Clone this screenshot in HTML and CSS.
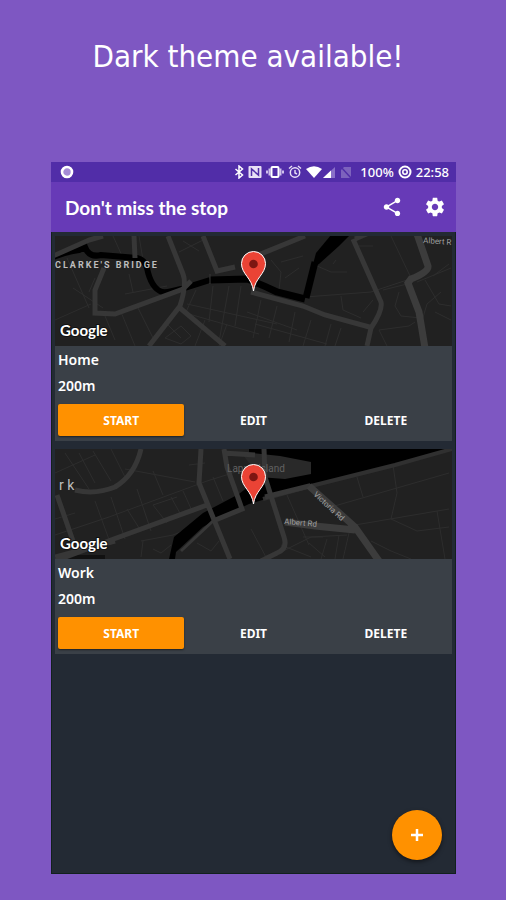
FILE: index.html
```
<!DOCTYPE html>
<html lang="en">
<head>
  <meta charset="UTF-8" />
  <meta name="viewport" content="width=device-width, initial-scale=1" />
  <title>Don't miss the stop</title>
  <link rel="stylesheet" href="styles.css">
</head>

<body>
  <h1 class="headline">Dark theme available!</h1>

  <div class="phone">
    <div class="status-bar">
      <svg class="status-dot" viewBox="0 0 14 14">
        <circle cx="7" cy="7" r="5" fill="#a58bd6" stroke="#fff" stroke-width="2.6"/>
      </svg>
      <div class="status-icons">
        <!-- bluetooth -->
        <svg width="10" height="14" viewBox="0 0 10 14">
          <path d="M1.500 4l7 6L5 13V1l3.500 3-7 6" fill="none" stroke="#fff" stroke-width="1.500"/>
        </svg>
        <!-- nfc -->
        <svg width="14" height="14" viewBox="0 0 14 14">
          <rect x="0.500" y="1" width="13" height="12" rx="1" fill="#e8e0f6"/>
          <path d="M3.500 11V4l7 6V3" fill="none" stroke="#512da8" stroke-width="1.500"/>
        </svg>
        <!-- vibrate -->
        <svg width="18" height="14" viewBox="0 0 18 14">
          <path d="M3.500 3.500v7M14.500 3.500v7M1 5.500v3M17 5.500v3" stroke="#cfc0ec" stroke-width="2"/>
          <rect x="5.500" y="2" width="7" height="10" rx="1" fill="none" stroke="#fff" stroke-width="2"/>
        </svg>
        <!-- alarm -->
        <svg width="14" height="14" viewBox="0 0 14 14">
          <circle cx="7" cy="7.500" r="4.700" fill="none" stroke="#e8e0f6" stroke-width="1.500"/>
          <path d="M1 3.500L4 1M13 3.500L10 1M7 5v3l2 1" fill="none" stroke="#e8e0f6" stroke-width="1.400"/>
        </svg>
        <!-- wifi and signal -->
        <svg width="30" height="14" viewBox="0 0 30 14">
          <path d="M0 4Q8 -1.500 16 4L8 13z" fill="#fff"/>
          <path d="M17 13L29 2v11z" fill="#8a6fc8"/>
          <path d="M17 13L25 5.500V13z" fill="#fff"/>
        </svg>
        <!-- no sim -->
        <svg class="no-sim" width="12" height="14" viewBox="0 0 12 14">
          <path d="M4 2h7v11H1V5z" fill="#7d62bd"/>
          <path d="M0 1l11 12" stroke="#512da8" stroke-width="1.500"/>
        </svg>
        <span>100%</span>
        <!-- battery -->
        <svg width="14" height="14" viewBox="0 0 14 14">
          <circle cx="7" cy="7" r="5.500" fill="none" stroke="#fff" stroke-width="2"/>
          <circle cx="7" cy="7" r="2.200" fill="none" stroke="#fff" stroke-width="1.600"/>
        </svg>
        <span>22:58</span>
      </div>
    </div>

    <header class="app-bar">
      <h2>Don't miss the stop</h2>
      <button type="button" class="icon-button" aria-label="Share">
        <svg width="22" height="22" viewBox="0 0 24 24">
          <path d="M18 16.080c-.76 0-1.440.3-1.960.77L8.910 12.700c.05-.23.09-.46.09-.7s-.04-.47-.09-.7l7.050-4.110c.54.5 1.250.81 2.040.81 1.660 0 3-1.340 3-3s-1.340-3-3-3-3 1.340-3 3c0 .24.04.47.09.7L8.040 9.810C7.500 9.310 6.790 9 6 9c-1.660 0-3 1.340-3 3s1.340 3 3 3c.79 0 1.500-.31 2.040-.81l7.120 4.160c-.05.21-.08.43-.08.65 0 1.610 1.310 2.920 2.920 2.920s2.920-1.310 2.920-2.920-1.310-2.920-2.920-2.920z"/>
        </svg>
      </button>
      <button type="button" class="icon-button" aria-label="Settings">
        <svg width="22" height="22" viewBox="0 0 24 24">
          <path d="M19.430 12.980c.04-.32.07-.64.07-.98s-.03-.66-.07-.98l2.110-1.650c.19-.15.24-.42.12-.64l-2-3.460c-.12-.22-.39-.3-.61-.22l-2.490 1c-.52-.4-1.080-.73-1.690-.98l-.38-2.650C14.460 2.180 14.250 2 14 2h-4c-.25 0-.46.18-.49.42l-.38 2.650c-.61.25-1.170.59-1.690.98l-2.490-1c-.23-.09-.49 0-.61.22l-2 3.460c-.13.22-.07.49.12.64l2.110 1.650c-.04.32-.07.65-.07.98s.03.66.07.98l-2.110 1.650c-.19.15-.24.42-.12.64l2 3.460c.12.22.39.3.61.22l2.490-1c.52.4 1.080.73 1.690.98l.38 2.650c.03.24.24.42.49.42h4c.25 0 .46-.18.49-.42l.38-2.650c.61-.25 1.170-.59 1.690-.98l2.490 1c.23.09.49 0 .61-.22l2-3.460c.12-.22.07-.49-.12-.64l-2.110-1.650zM12 15.500c-1.930 0-3.500-1.570-3.500-3.500s1.570-3.500 3.500-3.500 3.500 1.570 3.500 3.500-1.570 3.500-3.500 3.500z"/>
        </svg>
      </button>
    </header>

    <main class="stops">
      <article class="stop">
        <svg class="map" viewBox="0 0 397 110" preserveAspectRatio="xMidYMid slice">
          <rect width="397" height="110" fill="#212121"/>
          <g class="lane">
            <path d="M12 22l22 50M18 52l30 20M58 0l10 22M84 0l4 24M124 16l26-13 3 14M128 5l16 10M70 58l42-8M78 56l-4-18M40 42l-6 14M0 84l36-16M50 80l10 24M66 76l14 34M82 70l16 32"/>
            <path d="M141 54l-10 22M158 50l-4 36M174 50l-10 56M132 68l90 20M134 78l70 20M150 84l-10 26M172 88l-8 22M186 50l-6 40M112 88l14 14M110 102l16-12 10 10-10 8z"/>
            <path d="M216 24l10 12-2 18M226 26l22-6M230 42l14-10M262 30l14 6 16 0M278 28l3-4M192 76l50 18M206 64l-8 38M222 70l-8 32M240 76l-6 30M256 84l-8 26M200 88l72 20M276 88l-6 22M286 92l-6 18"/>
            <path d="M250 61l66-5 42-14M286 60l2 14 18 8M308 76l10-12M328 54l24-6M344 56l-4 14 6 10 20 2M324 94l30-4 6-4M362 46l34-14M370 44l14 24 12 2M378 40l16-12M386 56l-14 12-6 20M324 94l8 16M380 76l16 8M300 10l18 0M336 0l20 42"/>
          </g>
          <g class="water">
            <path d="M-2 21Q10 16 24 14L30 11Q34 22 46 19L82 22Q90 24 92 32Q96 52 107 56Q112 57 126 53L155 44" stroke-width="6"/>
            <path d="M155 44L192 43Q206 48 222 56L250 63" stroke-width="7"/>
            <path d="M251 62L260 26" stroke-width="7"/>
            <path d="M257 32L261 17L276 -1H295L284 10L264 28Z" fill="#000" stroke="none"/>
          </g>
          <g class="road">
            <path d="M-2 20L34 4L48 0M79 0L80 22M49 32L40 54V77L60 78L128 53L136 45M113 0L128 38Q132 48 125 70L94 110M125 72L170 110M148 0L162 35L180 31"/>
            <path d="M196 22L250 0M196 56L248 70L270 79L318 92"/>
            <path d="M298 3L326 66Q328 74 316 92L312 110M300 3L316 -4"/>
            <path d="M155 38v10" stroke-width="1"/>
          </g>
          <path class="avenue" d="M362 -2L373 30Q374 36 356 43L353 47L364 76L370 112"/>
          <text class="district" x="0" y="32">CLARKE'S BRIDGE</text>
          <text class="street" x="368" y="7" transform="rotate(4 368 7)">Albert R</text>
          <text class="google" x="5" y="100">Google</text>
          <path class="pin" d="M198.500 55C197 42 186.500 38 186.500 27.500a12 12 0 0 1 24 0C210.500 38 200 42 198.500 55z"/>
          <circle cx="198.500" cy="28" r="4.300" fill="#7d1612"/>
        </svg>
        <div class="details">
          <h3>Home</h3>
          <p>200m</p>
          <div class="actions">
            <button type="button" class="start">Start</button>
            <button type="button">Edit</button>
            <button type="button">Delete</button>
          </div>
        </div>
      </article>

      <article class="stop">
        <svg class="map" viewBox="0 0 397 110" preserveAspectRatio="xMidYMid slice">
          <rect width="397" height="110" fill="#212121"/>
          <g class="lane">
            <path d="M0 24l40-18M10 4l24 36M24 4l16 30M38 2l18 30M56 0l14 28M70 20l70 13M98 22l10 24M0 86l54-18 98-36 32-10M40 52l16 44M56 48l14 42M72 60l14 22M82 40l14 42M98 56l14 18M116 48l10 18M128 42l10 22M98 56l24-8"/>
            <path d="M0 70l20-6M134 16l16-2M88 92l-2 16M86 92l32-6 10-4M98 100l8 4 10-8M142 94l14 8 8-10M158 28l10 24M196 80l16 30"/>
            <path d="M232 46l22 50M302 28l6 20M276 58l118-34M338 16l4 28-6 26M300 76l94-16M336 70l26 12 32-4M382 62l8 48M316 92l20 10 20 8M216 108l40-20 36-2M254 94l16 14M272 90l-6 20M284 86l-4 24M294 84l-6 26M248 88l20 0M226 96l30 12"/>
          </g>
          <path fill="#000" d="M194 0H397L340 17L255 37L194 55L160 71L148 78L121 103L120 110H114L119 88L148 64L184 45L194 37z"/>
          <path d="M186 3L225 7L256 13V25L230 30L204 28z" fill="#292929"/>
          <path d="M0 106h50v4H0z" fill="#111"/>
          <path d="M208 50L256 37L340 16L397 0" fill="none" stroke="#303030" stroke-width="4"/>
          <g class="road">
            <path d="M86 0Q80 26 60 38Q40 46 20 41M2 46L18 92M0 112L56 91L152 56M146 0L144 34L175 110M169 0L172 18L187 60L158 72M209 0L210 28L229 88Q233 100 222 104L206 112M210 48L254 37L272 54M0 108L60 92M168 4L200 6"/>
            <path d="M158 72L126 102" stroke-width="3"/>
          </g>
          <path class="avenue" d="M230 73L260 77L300 81M254 37L300 78L324 112"/>
          <text class="place" x="172" y="23">Lapp's Island</text>
          <text class="place big" x="4" y="41">r k</text>
          <text class="street" x="229" y="75" transform="rotate(5 229 75)">Albert Rd</text>
          <text class="street" x="258" y="46" transform="rotate(43 258 46)">Victoria Rd</text>
          <text class="google" x="5" y="100">Google</text>
          <path class="pin" d="M198.500 55C197 42 186.500 38 186.500 27.500a12 12 0 0 1 24 0C210.500 38 200 42 198.500 55z"/>
          <circle cx="198.500" cy="28" r="4.300" fill="#7d1612"/>
        </svg>
        <div class="details">
          <h3>Work</h3>
          <p>200m</p>
          <div class="actions">
            <button type="button" class="start">Start</button>
            <button type="button">Edit</button>
            <button type="button">Delete</button>
          </div>
        </div>
      </article>
    </main>

    <button type="button" class="add-button" aria-label="Add stop">
      <svg width="14" height="14" viewBox="0 0 14 14">
        <path d="M7 1v12M1 7h12" stroke="#fff" stroke-width="2.500"/>
      </svg>
    </button>
  </div>
</body>
</html>
```
FILE: styles.css
```
* {
  box-sizing: border-box;
}

body {
  display: flex;
  flex-direction: column;
  min-height: 100vh;
  margin: 0;
  background: #7e57c2;
  color: #fff;
  font-family: "Noto Sans", sans-serif;
}

h1, h2, h3, p {
  margin: 0;
}

svg {
  display: block;
}

.headline {
  padding: 32px 16px 82px 6px;
  font-family: "DejaVu Sans Condensed", "DejaVu Sans", sans-serif;
  font-size: 31px;
  font-weight: 400;
  line-height: 48px;
  text-align: center;
}

.phone {
  position: relative;
  display: flex;
  flex: 1;
  flex-direction: column;
  margin: 0 50px 26px 51px;
  background: #232a34;
  border-bottom: 1px solid #12201e;
}

.status-bar {
  display: flex;
  align-items: center;
  justify-content: space-between;
  height: 20px;
  padding: 0 7px 0 9px;
  background: #512da8;
  font-size: 13px;
  font-weight: 500;
}

.status-dot {
  width: 14px;
  height: 14px;
}

.status-icons {
  display: flex;
  align-items: center;
  gap: 4px;
}

.no-sim {
  margin-right: 4px;
}

.app-bar {
  display: flex;
  align-items: center;
  gap: 13px;
  height: 50px;
  padding: 0 6px 0 14px;
  background: #673ab7;
}

.app-bar h2 {
  flex: 1;
  font-family: Lato, sans-serif;
  font-size: 19px;
  font-weight: 700;
}

.icon-button {
  display: flex;
  align-items: center;
  justify-content: center;
  width: 30px;
  height: 30px;
  padding: 0;
  background: none;
  border: 0;
  cursor: pointer;
}

.icon-button svg {
  fill: #fff;
}

.stops {
  display: flex;
  flex: 1;
  flex-direction: column;
  gap: 8px;
  padding: 4px 3px 4px 3px;
  border: solid #12201e;
  border-width: 0 1px;
}

.stop {
  background: #3a4047;
}

.map {
  width: 100%;
  height: 110px;
}

.lane {
  fill: none;
  stroke: #2d2d2d;
  stroke-width: 1;
}

.road {
  fill: none;
  stroke: #373737;
  stroke-width: 5;
}

.avenue {
  fill: none;
  stroke: #3c3c3c;
  stroke-width: 7;
}

.water {
  fill: none;
  stroke: #000;
}

.district {
  fill: #bdbdbd;
  font: 700 9px Roboto, sans-serif;
  letter-spacing: 2px;
}

.street {
  fill: #9e9e9e;
  font: 8px Roboto, sans-serif;
}

.place {
  fill: #616161;
  font: 10px Roboto, sans-serif;
}

.place.big {
  fill: #bdbdbd;
  font-size: 14px;
}

.google {
  fill: #fff;
  stroke: #111;
  stroke-width: 2px;
  paint-order: stroke;
  font: 700 15px Lato, sans-serif;
}

.pin {
  fill: #ea4335;
  stroke: #fff;
  stroke-width: 1px;
}

.details {
  padding: 4px 3px 5px;
}

.details h3,
.details p {
  font-size: 14px;
  font-weight: 600;
  line-height: 20px;
}

.details p {
  margin-top: 6px;
}

.actions {
  display: grid;
  grid-template-columns: repeat(3, 1fr);
  gap: 6px;
  margin-top: 8px;
}

.actions button {
  height: 32px;
  padding: 0;
  background: none;
  border: 0;
  border-radius: 2px;
  color: #fff;
  font: 700 12px "Noto Sans", sans-serif;
  text-transform: uppercase;
  cursor: pointer;
}

.actions .start {
  background: #ff9100;
  box-shadow: 0 1px 2px rgba(0, 0, 0, 0.5);
}

.add-button {
  position: absolute;
  right: 14px;
  bottom: 13px;
  display: flex;
  align-items: center;
  justify-content: center;
  width: 50px;
  height: 50px;
  padding: 0;
  background: #ff9100;
  border: 0;
  border-radius: 50%;
  box-shadow: 0 2px 4px rgba(0, 0, 0, 0.5);
  cursor: pointer;
}
```
